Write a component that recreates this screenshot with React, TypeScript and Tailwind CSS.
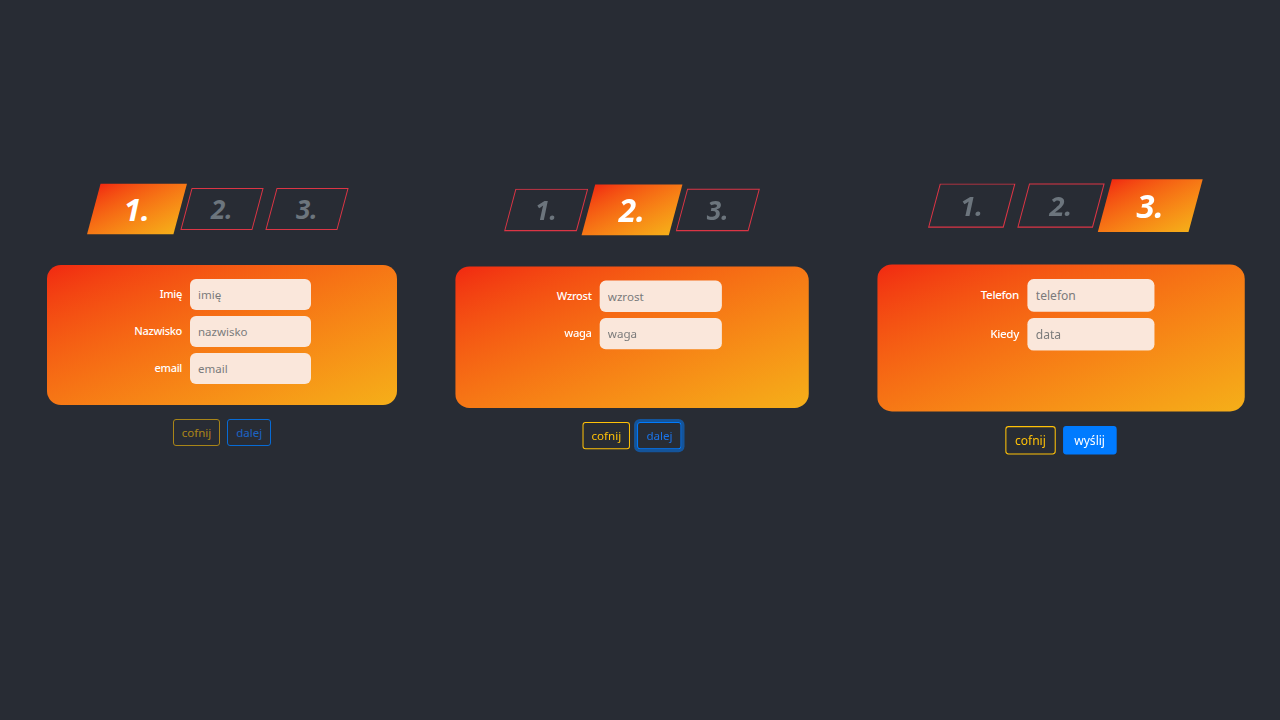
import React from 'react'

type Field = { label: string; placeholder: string }

const steps = ['1.', '2.', '3.']

function Steps({ active }: { active: number }) {
  return (
    <div className="flex justify-center gap-[13px]">
      {steps.map((s, i) =>
        i === active ? (
          <div
            key={s}
            className="w-[72px] h-[42px] -skew-x-[15deg] scale-[1.2] bg-gradient-to-br from-[#f12711] to-[#f5af19] flex items-center justify-center"
          >
            <span className="skew-x-[15deg] text-[26px] font-bold italic text-white leading-none">{s}</span>
          </div>
        ) : (
          <div
            key={s}
            className="w-[72px] h-[42px] -skew-x-[15deg] border-[1.5px] border-[#dc3545] flex items-center justify-center"
          >
            <span className="skew-x-[15deg] text-[26px] font-bold italic text-[#6c757d] leading-none">{s}</span>
          </div>
        )
      )}
    </div>
  )
}

function Step({
  active,
  fields,
  last,
  className,
}: {
  active: number
  fields: Field[]
  last?: boolean
  className: string
}) {
  return (
    <div className={'w-[350px] flex flex-col ' + className}>
      <Steps active={active} />

      <div className="mt-[35px] h-[140px] rounded-[14px] bg-gradient-to-br from-[#f12711] to-[#f5af19] pt-[14px]">
        <div className="grid grid-cols-[135px_121px] gap-x-[8px] gap-y-[6px] items-center">
          {fields.map((f) => (
            <React.Fragment key={f.label}>
              <label className="text-right text-[11px] font-medium tracking-[-0.3px] text-white">{f.label}</label>
              <input
                type="text"
                placeholder={f.placeholder}
                className="h-[31px] w-[121px] rounded-[6px] bg-[#fae7db] px-[8px] text-[11.5px] text-gray-700 placeholder:text-[#7b7b7b] outline-none"
              />
            </React.Fragment>
          ))}
        </div>
      </div>

      <div className="mt-[14px] flex justify-center gap-[7px]">
        <button
          disabled={active === 0}
          className={
            'h-[27px] px-[8px] rounded-[3px] border border-[#ffc107] text-[11.5px] text-[#ffc107] ' +
            (active === 0 ? 'opacity-60' : '')
          }
        >
          cofnij
        </button>
        {last ? (
          <button className="h-[27px] px-[10px] rounded-[3px] border border-[#007bff] bg-[#007bff] text-[11.5px] text-white">
            wyślij
          </button>
        ) : (
          <button
            className={
              'h-[27px] px-[8px] rounded-[3px] border border-[#007bff] text-[11.5px] text-[#1a73e8] ' +
              (active === 1 ? 'shadow-[0_0_0_3px_rgba(0,123,255,0.5)]' : 'opacity-80')
            }
          >
            dalej
          </button>
        )}
      </div>
    </div>
  )
}

export default function App() {
  return (
    <div
      className="min-h-screen w-full bg-[#282c34] pt-[188px] pl-[47px] flex items-start"
      style={{ fontFamily: '"Noto Sans", "Open Sans", sans-serif' }}
    >
      <Step
        active={0}
        className=""
        fields={[
          { label: 'Imię', placeholder: 'imię' },
          { label: 'Nazwisko', placeholder: 'nazwisko' },
          { label: 'email', placeholder: 'email' },
        ]}
      />
      <Step
        active={1}
        className="ml-[60px] mt-[2px] scale-[1.01]"
        fields={[
          { label: 'Wzrost', placeholder: 'wzrost' },
          { label: 'waga', placeholder: 'waga' },
        ]}
      />
      <Step
        active={2}
        last
        className="ml-[79px] mt-[2px] scale-[1.05]"
        fields={[
          { label: 'Telefon', placeholder: 'telefon' },
          { label: 'Kiedy', placeholder: 'data' },
        ]}
      />
    </div>
  )
}
